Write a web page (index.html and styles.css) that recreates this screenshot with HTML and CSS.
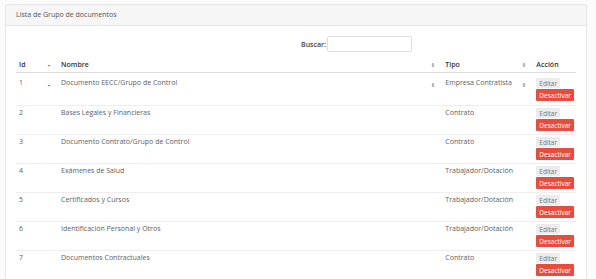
FILE: index.html
```html
<!DOCTYPE html>
<html lang="es">
<head>
<meta charset="UTF-8">
<meta name="viewport" content="width=device-width, initial-scale=1.0">
<title>Grupo de documentos</title>
<link rel="stylesheet" href="styles.css">
</head>
<body>
    <div class="panel">
        <div class="panel-heading">Lista de Grupo de documentos</div>
        <div class="panel-body">
            <div class="buscar">
                <label for="buscar">Buscar:</label>
                <input type="search" id="buscar">
            </div>
            <table class="tabla">
                <thead>
                    <tr>
                        <th class="col-id"><div class="celda">Id <svg class="orden" viewBox="0 0 4 6"><path d="M0.5 3h3L2 4.5z"/></svg></div></th>
                        <th class="col-nombre"><div class="celda">Nombre <svg class="orden" viewBox="0 0 4 6"><path d="M0.5 2.6h3L2 1zM0.5 3.4h3L2 5z"/></svg></div></th>
                        <th class="col-tipo"><div class="celda">Tipo <svg class="orden" viewBox="0 0 4 6"><path d="M0.5 2.6h3L2 1zM0.5 3.4h3L2 5z"/></svg></div></th>
                        <th class="col-accion">Acción</th>
                    </tr>
                </thead>
                <tbody>
                    <tr class="primera">
                        <td><div class="celda">1 <svg class="orden" viewBox="0 0 4 6"><path d="M0.5 3h3L2 4.5z"/></svg></div></td>
                        <td><div class="celda">Documento EECC/Grupo de Control <svg class="orden" viewBox="0 0 4 6"><path d="M0.5 2.6h3L2 1zM0.5 3.4h3L2 5z"/></svg></div></td>
                        <td><div class="celda">Empresa Contratista <svg class="orden" viewBox="0 0 4 6"><path d="M0.5 2.6h3L2 1zM0.5 3.4h3L2 5z"/></svg></div></td>
                        <td><button class="btn btn-editar">Editar</button><button class="btn btn-desactivar">Desactivar</button></td>
                    </tr>
                    <tr>
                        <td>2</td>
                        <td>Bases Legales y Financieras</td>
                        <td>Contrato</td>
                        <td><button class="btn btn-editar">Editar</button><button class="btn btn-desactivar">Desactivar</button></td>
                    </tr>
                    <tr>
                        <td>3</td>
                        <td>Documento Contrato/Grupo de Control</td>
                        <td>Contrato</td>
                        <td><button class="btn btn-editar">Editar</button><button class="btn btn-desactivar">Desactivar</button></td>
                    </tr>
                    <tr>
                        <td>4</td>
                        <td>Exámenes de Salud</td>
                        <td>Trabajador/Dotación</td>
                        <td><button class="btn btn-editar">Editar</button><button class="btn btn-desactivar">Desactivar</button></td>
                    </tr>
                    <tr>
                        <td>5</td>
                        <td>Certificados y Cursos</td>
                        <td>Trabajador/Dotación</td>
                        <td><button class="btn btn-editar">Editar</button><button class="btn btn-desactivar">Desactivar</button></td>
                    </tr>
                    <tr>
                        <td>6</td>
                        <td>Identificación Personal y Otros</td>
                        <td>Trabajador/Dotación</td>
                        <td><button class="btn btn-editar">Editar</button><button class="btn btn-desactivar">Desactivar</button></td>
                    </tr>
                    <tr>
                        <td>7</td>
                        <td>Documentos Contractuales</td>
                        <td>Contrato</td>
                        <td><button class="btn btn-editar">Editar</button><button class="btn btn-desactivar">Desactivar</button></td>
                    </tr>
                </tbody>
            </table>
        </div>
    </div>
</body>
</html>
```

FILE: styles.css
```css
body {
    font-family: "Open Sans", sans-serif;
    font-size: 7px;
    color: #5e5e5e;
    background-color: #fbfbfb;
    margin: 0;
    padding: 4px 0 0 5px;
}
.panel {
    width: 580px;
    background-color: #fff;
    border: 1px solid #e6e6e6;
    border-radius: 2px;
}
.panel-heading {
    background-color: #f6f6f6;
    border-bottom: 1px solid #e6e6e6;
    padding: 5px 10px;
    line-height: 10px;
    color: #555;
}
.panel-body {
    padding: 10px 10px 0;
}
.buscar {
    display: flex;
    justify-content: flex-end;
    align-items: center;
    padding-right: 164px;
    margin-bottom: 6px;
}
.buscar label {
    color: #444;
    font-weight: 600;
    margin-right: 1px;
}
.buscar input {
    box-sizing: border-box;
    width: 85px;
    height: 16px;
    padding: 0 2px;
    margin: 0;
    border: 1px solid #ddd;
    border-radius: 2px;
    font: inherit;
}
.tabla {
    width: 560px;
    border-collapse: collapse;
}
.tabla th,
.tabla td {
    text-align: left;
    vertical-align: top;
    padding: 0 2px 0 3px;
    line-height: 10px;
}
.tabla th {
    color: #333;
    font-weight: 600;
    padding-top: 2px;
    padding-bottom: 2px;
    border-bottom: 1px solid #ddd;
}
.tabla td {
    padding-top: 2px;
    padding-bottom: 3px;
    border-bottom: 1px solid #eee;
}
.tabla .primera td {
    padding-top: 5px;
    padding-bottom: 4px;
}
.col-id { width: 37px; }
.col-tipo { width: 86px; }
.col-accion { width: 37px; }
.celda {
    display: flex;
    justify-content: space-between;
    align-items: center;
    padding-right: 5px;
}
.orden {
    width: 4px;
    height: 6px;
    fill: #777;
}
td .orden {
    margin-top: 4px;
}
.btn {
    display: block;
    font-family: inherit;
    font-size: 6.5px;
    padding: 0 3px;
    border: none;
    border-radius: 1px;
}
.btn-editar {
    height: 10px;
    background-color: #ececec;
    color: #777;
    margin-bottom: 1px;
}
.btn-desactivar {
    height: 12px;
    background-color: #e74c3c;
    color: #fff;
}
```
